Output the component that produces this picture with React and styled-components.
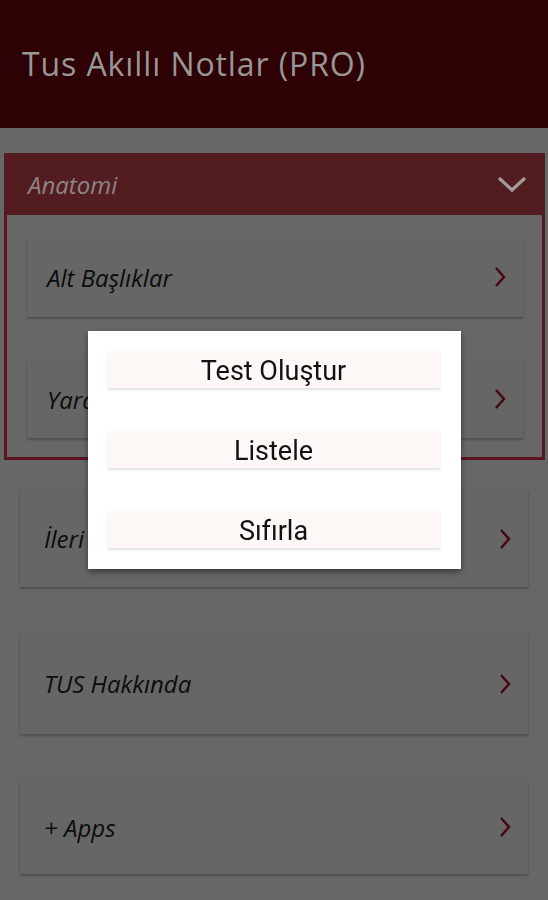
import React from 'react';
import styled, { createGlobalStyle } from 'styled-components';

const GlobalStyle = createGlobalStyle`
  html, body {
    margin: 0;
    padding: 0;
    background: #676767;
  }
  body {
    font-family: "Open Sans", "Liberation Sans", sans-serif;
  }
`;

const Page = styled.div`
  width: 548px;
  height: 900px;
  overflow: hidden;
  background: #676767;
`;

const TopBar = styled.header`
  height: 128px;
  background: #2e0204;
  display: flex;
  align-items: center;
  padding: 0 0 2px 22px;
  box-sizing: border-box;
`;

const Title = styled.h1`
  margin: 0;
  font-family: "Open Sans", "Noto Sans", sans-serif;
  font-weight: 400;
  font-size: 32px;
  letter-spacing: 0.9px;
  color: #979797;
`;

const Body = styled.main`
  padding: 25px 3px 0 4px;
  display: flex;
  flex-direction: column;
`;

const Accordion = styled.section`
  display: flex;
  flex-direction: column;
`;

const AccordionHead = styled.div`
  height: 62px;
  background: #521c20;
  display: flex;
  align-items: center;
  justify-content: space-between;
  padding: 0 18px 0 24px;
`;

const AccordionTitle = styled.span`
  font-style: italic;
  font-size: 24px;
  color: #8d8585;
`;

const AccordionBody = styled.div`
  border: 3px solid #5c1520;
  border-top: none;
  padding: 22px 19px 19px 20px;
  display: flex;
  flex-direction: column;
  gap: 43px;
`;

const Card = styled.div`
  height: ${p => p.$h}px;
  background: #666;
  box-shadow: 0 2px 2px rgba(0, 0, 0, 0.22), 0 0 1px rgba(0, 0, 0, 0.12);
  display: flex;
  align-items: center;
  justify-content: space-between;
  padding: 0 16px 0 ${p => p.$pad}px;
`;

const CardLabel = styled.span`
  font-style: italic;
  font-size: 24px;
  color: #0c0c0c;
`;

const List = styled.div`
  padding: 30px 17px 0 16px;
  display: flex;
  flex-direction: column;
  gap: 46px;
`;

const Scrim = styled.div`
  position: fixed;
  inset: 0;
  display: flex;
  align-items: center;
  justify-content: center;
`;

const Dialog = styled.div`
  width: 373px;
  box-sizing: border-box;
  background: #fff;
  padding: 20px 21px 21px 20px;
  display: flex;
  flex-direction: column;
  gap: 43px;
  box-shadow: 0 3px 6px rgba(0, 0, 0, 0.45);
`;

const DialogButton = styled.button`
  height: 37px;
  border: none;
  background: #fdf8f6;
  box-shadow: 0 2px 2px rgba(0, 0, 0, 0.12);
  font-family: Roboto, "Liberation Sans", sans-serif;
  font-size: 27px;
  line-height: 1;
  color: #111;
  padding: 4px 0 0;
  cursor: pointer;
`;

const Chevron = ({ color = '#44070f' }) => (
  <svg width="14" height="22" viewBox="0 0 14 22">
    <path d="M3 2 L11 11 L3 20" fill="none" stroke={color} strokeWidth="2.4" />
  </svg>
);

const ChevronDown = () => (
  <svg width="30" height="18" viewBox="0 0 30 18">
    <path d="M2 3 L15 15 L28 3" fill="none" stroke="#a49b9b" strokeWidth="3.2" />
  </svg>
);

const subItems = [
  { label: 'Alt Başlıklar', h: 80 },
  { label: 'Yardımcı Notlar', h: 78 },
];

const items = [
  { label: 'İleri Düzey', h: 97 },
  { label: 'TUS Hakkında', h: 101 },
  { label: '+ Apps', h: 94 },
];

function App() {
  return (
    <Page>
      <GlobalStyle />
      <TopBar>
        <Title>Tus Akıllı Notlar (PRO)</Title>
      </TopBar>
      <Body>
        <Accordion>
          <AccordionHead>
            <AccordionTitle>Anatomi</AccordionTitle>
            <ChevronDown />
          </AccordionHead>
          <AccordionBody>
            {subItems.map(item => (
              <Card key={item.label} $h={item.h} $pad={20}>
                <CardLabel>{item.label}</CardLabel>
                <Chevron />
              </Card>
            ))}
          </AccordionBody>
        </Accordion>
        <List>
          {items.map(item => (
            <Card key={item.label} $h={item.h} $pad={24}>
              <CardLabel>{item.label}</CardLabel>
              <Chevron />
            </Card>
          ))}
        </List>
      </Body>
      <Scrim>
        <Dialog>
          <DialogButton>Test Oluştur</DialogButton>
          <DialogButton>Listele</DialogButton>
          <DialogButton>Sıfırla</DialogButton>
        </Dialog>
      </Scrim>
    </Page>
  );
}

export default App;
